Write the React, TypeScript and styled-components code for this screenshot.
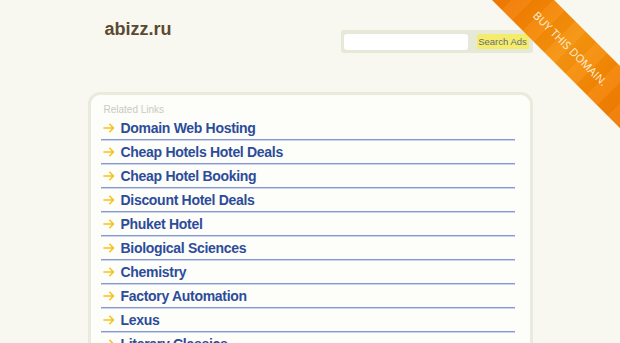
import * as React from 'react';
import styled, { createGlobalStyle } from 'styled-components';

const GlobalStyle = createGlobalStyle`
    html, body {
        margin: 0;
        padding: 0;
        background: #f8f8f1;
        font-family: "Liberation Sans", Arial, sans-serif;
        overflow: hidden;
    }
`;

const Page = styled.div`
    position: relative;
    width: 620px;
    height: 343px;
    overflow: hidden;
`;

const Wrap = styled.div`
    width: 445px;
    margin: 0 auto;
`;

const Header = styled.header`
    display: flex;
    justify-content: space-between;
    align-items: flex-start;
    height: 92px;
`;

const Title = styled.h1`
    margin: 18px 0 0 17px;
    font-size: 18px;
    line-height: 22px;
    font-weight: 700;
    color: #5a4a31;
`;

const SearchBox = styled.form`
    display: flex;
    align-items: center;
    gap: 9px;
    margin-top: 30px;
    padding: 3px 4px 3px 3px;
    height: 17px;
    background: #e6e9d8;
    border-radius: 3px;
`;

const SearchInput = styled.input`
    box-sizing: border-box;
    width: 124px;
    height: 16px;
    border: none;
    border-radius: 3px;
    background: #ffffff;
    outline: none;
`;

const SearchButton = styled.button`
    box-sizing: border-box;
    width: 52px;
    height: 15px;
    padding: 0;
    border: none;
    border-radius: 2px;
    background: #f4ec6a;
    color: #646c7a;
    font-family: "Liberation Sans", Arial, sans-serif;
    font-size: 9.5px;
    line-height: 15px;
`;

const Panel = styled.section`
    box-sizing: border-box;
    height: 280px;
    border: 3px solid #e9ebdc;
    border-radius: 12px;
    background: #fdfdf9;
    padding: 9px 15px 0 10px;
`;

const Caption = styled.div`
    padding-left: 3px;
    font-size: 10px;
    line-height: 12px;
    color: #c9cac2;
`;

const LinkList = styled.ul`
    list-style: none;
    margin: 0;
    padding: 0;
`;

const LinkRow = styled.li`
    display: flex;
    align-items: center;
    gap: 6px;
    height: 23px;
    padding: 1px 0 0 2px;
    box-sizing: border-box;
    height: 24px;
    border-bottom: 1px solid #8498d6;
    box-shadow: 0 1px 0 #ccd4f1;
`;

const LinkText = styled.a`
    font-size: 14px;
    letter-spacing: -0.3px;
    font-weight: 700;
    color: #2c4c9b;
    text-decoration: none;
`;

const RibbonClip = styled.div`
    position: absolute;
    top: 0;
    right: 0;
    width: 128px;
    height: 128px;
    overflow: hidden;
    pointer-events: none;
`;

const RibbonBand = styled.div`
    position: absolute;
    left: -27px;
    top: 26px;
    width: 212px;
    height: 44px;
    transform: rotate(45deg);
    display: flex;
    align-items: center;
    justify-content: center;
    background:
        repeating-linear-gradient(90deg, rgba(255, 255, 255, 0.05) 0 15px, rgba(0, 0, 0, 0.02) 15px 30px),
        linear-gradient(90deg, #ef7300 0%, #f48604 30%, #f6940e 50%, #f48604 70%, #ef7300 100%);
    color: #fff1de;
    font-family: "Open Sans", "Liberation Sans", sans-serif;
    font-weight: 400;
    font-size: 11px;
    letter-spacing: 0.1px;
    text-transform: uppercase;
`;

const Arrow = () => (
    <svg width="12" height="10" viewBox="0 0 12 10">
        <path d="M1 5 H10.5 M6.8 1.3 L10.5 5 L6.8 8.7" fill="none" stroke="#f4c21c" strokeWidth="1.6" strokeLinecap="round" strokeLinejoin="round" />
    </svg>
);

const links = [
    'Domain Web Hosting',
    'Cheap Hotels Hotel Deals',
    'Cheap Hotel Booking',
    'Discount Hotel Deals',
    'Phuket Hotel',
    'Biological Sciences',
    'Chemistry',
    'Factory Automation',
    'Lexus',
    'Literary Classics'
];

class App extends React.Component {
    render() {
        return (
            <Page>
                <GlobalStyle />
                <Wrap>
                    <Header>
                        <Title>abizz.ru</Title>
                        <SearchBox onSubmit={(e) => e.preventDefault()}>
                            <SearchInput type="text" />
                            <SearchButton type="submit">Search Ads</SearchButton>
                        </SearchBox>
                    </Header>
                    <Panel>
                        <Caption>Related Links</Caption>
                        <LinkList>
                            {links.map((l) => (
                                <LinkRow key={l}>
                                    <Arrow />
                                    <LinkText href="#">{l}</LinkText>
                                </LinkRow>
                            ))}
                        </LinkList>
                    </Panel>
                </Wrap>
                <RibbonClip>
                    <RibbonBand>Buy this domain.</RibbonBand>
                </RibbonClip>
            </Page>
        );
    }
}

export default App;
